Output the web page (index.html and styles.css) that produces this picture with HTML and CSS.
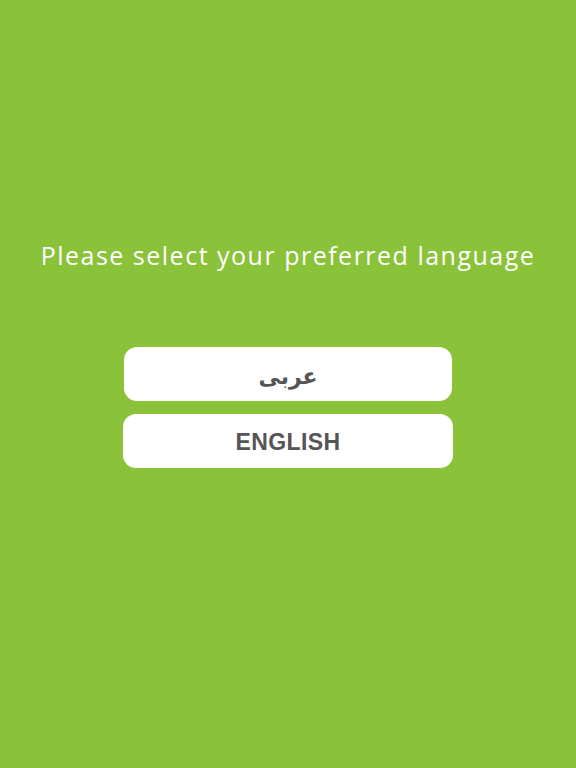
FILE: index.html
```html
<!DOCTYPE html>
<html>
<head>
<meta charset="utf-8">
<link rel="stylesheet" href="styles.css">
</head>
<body>
<main class="screen">
  <h1 class="title">Please select your preferred language</h1>
  <div class="options">
    <button class="lang lang-ar" lang="ar" dir="rtl">عربی</button>
    <button class="lang lang-en">ENGLISH</button>
  </div>
</main>
</body>
</html>
```
FILE: styles.css
```css
html, body {
  margin: 0;
  padding: 0;
  background: #8ac23a;
}
.screen {
  width: 576px;
  height: 768px;
  display: flex;
  flex-direction: column;
  align-items: center;
}
.title {
  margin: 239px 0 0 0;
  font-family: "Open Sans", "DejaVu Sans", sans-serif;
  font-weight: 400;
  font-size: 25px;
  letter-spacing: 1.5px;
  line-height: 32px;
  color: #ffffff;
  text-align: center;
  white-space: nowrap;
}
.options {
  margin-top: 76px;
  display: flex;
  flex-direction: column;
  align-items: center;
  gap: 13px;
}
.lang {
  border: none;
  background: #ffffff;
  color: #555555;
  font-family: "Liberation Sans", Arial, sans-serif;
  font-weight: 700;
  font-size: 22px;
  border-radius: 13px;
  display: flex;
  align-items: center;
  justify-content: center;
  padding: 0;
}
.lang-ar {
  width: 328px;
  height: 54px;
  font-family: "DejaVu Sans", sans-serif;
  font-size: 22px;
  padding-top: 4px;
}
.lang-en {
  width: 330px;
  height: 54px;
  font-size: 23px;
  letter-spacing: 0.4px;
  padding-top: 2px;
}
```
